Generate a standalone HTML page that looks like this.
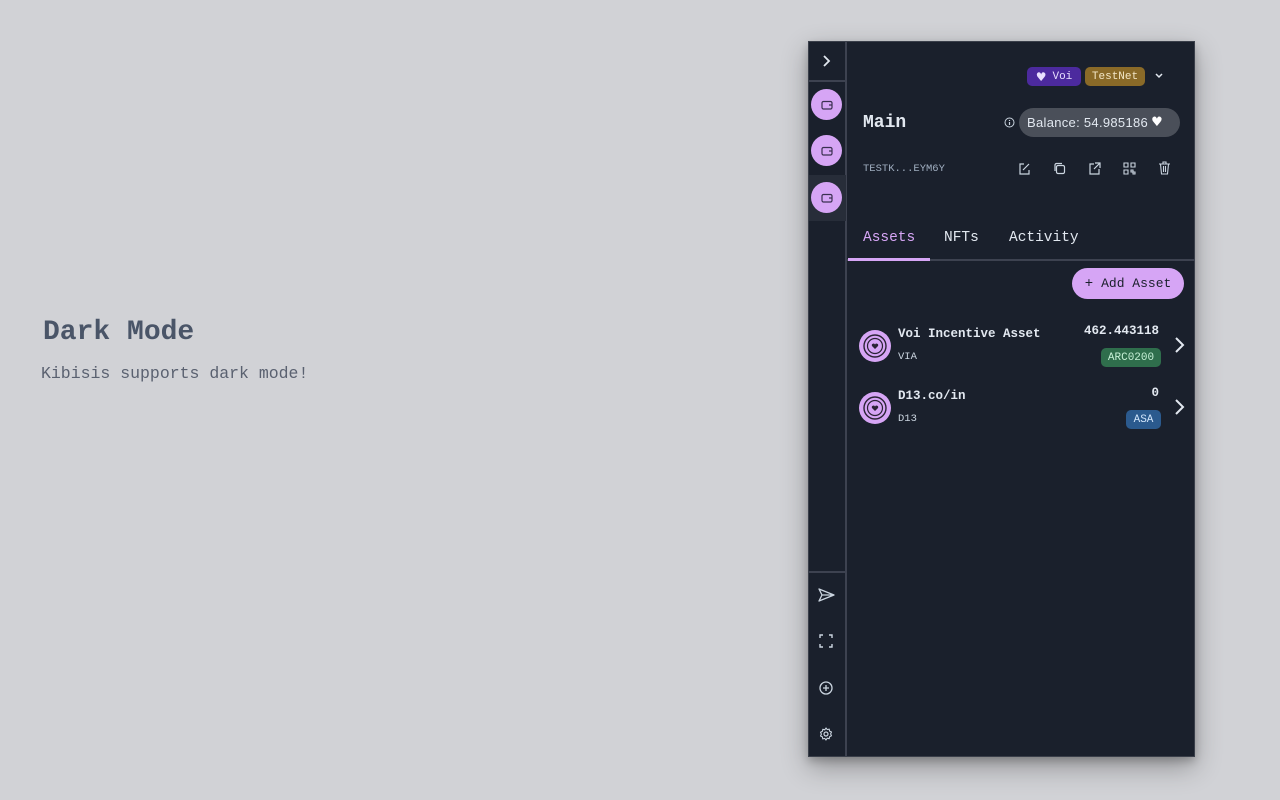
<!DOCTYPE html>
<html><head><style>
*{box-sizing:border-box;margin:0;padding:0}
body{width:1280px;height:800px;background:#d1d2d6;font-family:"Liberation Mono",monospace;position:relative;overflow:hidden}
.h{position:absolute;left:43px;top:317px;font-size:28px;color:#4a5568;font-weight:bold;letter-spacing:0px}
.s{position:absolute;left:41px;top:364px;font-size:16.5px;color:#5a6170}
.p{position:absolute;left:808px;top:41px;width:387px;height:716px;background:#1a202c;box-shadow:0 10px 25px rgba(0,0,0,.3),0 4px 8px rgba(0,0,0,.2);border:1px solid #3a3f4a;color:#e2e8f0}
.sb{position:absolute;left:0;top:0;width:38px;height:100%;border-right:2px solid #3d4250}
.hr{position:absolute;left:0;width:38px;height:2px;background:#3d4250}
.av{position:absolute;left:2px;width:31px;height:31px;border-radius:50%;background:#d6a5f5;display:flex;align-items:center;justify-content:center}
.ab{position:absolute;font-size:11px}
.tag{position:absolute;height:19px;border-radius:5px;font-size:11px;display:flex;align-items:center;justify-content:center}
svg{display:block}
</style></head><body>
<div class="h">Dark Mode</div>
<div class="s">Kibisis supports dark mode!</div>
<div class="p">
 <div class="sb">
  <svg style="position:absolute;left:12px;top:12px" width="12" height="14" viewBox="0 0 12 14"><path d="M3 2l5 5-5 5" stroke="#e2e8f0" stroke-width="1.8" fill="none"/></svg>
  <div class="hr" style="top:38px"></div>
  <div class="av" style="top:47px"><svg width="12" height="10" viewBox="0 0 12 10"><rect x="1" y="1.5" width="10" height="7.5" rx="1.5" stroke="#3a3050" stroke-width="1.2" fill="none"/><path d="M8 5h3" stroke="#3a3050" stroke-width="1.2"/></svg></div>
  <div class="av" style="top:93px"><svg width="12" height="10" viewBox="0 0 12 10"><rect x="1" y="1.5" width="10" height="7.5" rx="1.5" stroke="#3a3050" stroke-width="1.2" fill="none"/><path d="M8 5h3" stroke="#3a3050" stroke-width="1.2"/></svg></div>
  <div style="position:absolute;left:0;top:133px;width:37px;height:46px;background:#272d39"></div>
  <div class="av" style="top:140px"><svg width="12" height="10" viewBox="0 0 12 10"><rect x="1" y="1.5" width="10" height="7.5" rx="1.5" stroke="#3a3050" stroke-width="1.2" fill="none"/><path d="M8 5h3" stroke="#3a3050" stroke-width="1.2"/></svg></div>
  <div class="hr" style="top:529px"></div>
  <svg style="position:absolute;left:9px;top:546px" width="17" height="14" viewBox="0 0 17 14"><path d="M1 1l15 6-15 6 3-6z M4 7h12" stroke="#cbd5e0" stroke-width="1.3" fill="none" stroke-linejoin="round"/></svg>
  <svg style="position:absolute;left:10px;top:592px" width="14" height="14" viewBox="0 0 14 14"><path d="M1 4V1h3M10 1h3v3M13 10v3h-3M4 13H1v-3" stroke="#cbd5e0" stroke-width="1.4" fill="none"/></svg>
  <svg style="position:absolute;left:10px;top:639px" width="14" height="14" viewBox="0 0 14 14"><circle cx="7" cy="7" r="6" stroke="#cbd5e0" stroke-width="1.3" fill="none"/><path d="M7 4v6M4 7h6" stroke="#cbd5e0" stroke-width="1.3"/></svg>
  <svg style="position:absolute;left:10px;top:685px" width="14" height="14" viewBox="0 0 14 14"><circle cx="7" cy="7" r="2" stroke="#cbd5e0" stroke-width="1.2" fill="none"/><path d="M7 1l1.2 1.6 2-.5.4 2 1.9.9-.9 1.9.9 1.9-1.9.9-.4 2-2-.5L7 13l-1.2-1.6-2 .5-.4-2-1.9-.9.9-1.9-.9-1.9 1.9-.9.4-2 2 .5z" stroke="#cbd5e0" stroke-width="1.1" fill="none" stroke-linejoin="round"/></svg>
 </div>
 <div class="tag" style="left:218px;top:25px;width:54px;background:#4c2a9e;color:#e9e0ff"><span style="font-family:'DejaVu Sans';font-size:12px;margin-right:6px">♥</span>Voi</div>
 <div class="tag" style="left:276px;top:25px;width:60px;background:#8a6a28;color:#f2e6c6">TestNet</div>
 <svg style="position:absolute;left:345px;top:30px" width="10" height="8" viewBox="0 0 10 8"><path d="M2 2l3 3 3-3" stroke="#e2e8f0" stroke-width="1.5" fill="none"/></svg>
 <div style="position:absolute;left:54px;top:71px;font-size:18px;font-weight:bold;color:#e2e8f0">Main</div>
 <svg style="position:absolute;left:195px;top:75px" width="11" height="11" viewBox="0 0 11 11"><circle cx="5.5" cy="5.5" r="4.5" stroke="#cbd5e0" fill="none"/><path d="M5.5 5v3M5.5 3v1" stroke="#cbd5e0" stroke-width="1.2"/></svg>
 <div style="position:absolute;left:210px;top:66px;width:161px;height:29px;border-radius:15px;background:#4a4f59;color:#e2e8f0;font-family:'Liberation Sans',sans-serif;font-size:13px;display:flex;align-items:center;padding-left:8px;letter-spacing:.3px">Balance: 54.985186 <span style="font-family:'DejaVu Sans';margin-left:3px;color:#fff">♥</span></div>
 <div class="ab" style="left:54px;top:121px;color:#a0aec0;font-size:10.5px">TESTK...EYM6Y</div>
 <svg style="position:absolute;left:209px;top:120px" width="13" height="13" viewBox="0 0 13 13"><path d="M6 2H2v10h9V8M5 8l6-6" stroke="#cbd5e0" stroke-width="1.2" fill="none"/></svg>
 <svg style="position:absolute;left:244px;top:120px" width="13" height="13" viewBox="0 0 13 13"><rect x="3.5" y="3.5" width="8" height="8" rx="1.5" stroke="#cbd5e0" stroke-width="1.2" fill="none"/><path d="M2 9V3a1.5 1.5 0 0 1 1.5-1.5H9" stroke="#cbd5e0" stroke-width="1.2" fill="none"/></svg>
 <svg style="position:absolute;left:279px;top:120px" width="13" height="13" viewBox="0 0 13 13"><path d="M6 2H2v10h9V7M7 1h5v5M12 1L6 7" stroke="#cbd5e0" stroke-width="1.2" fill="none"/></svg>
 <svg style="position:absolute;left:314px;top:120px" width="13" height="13" viewBox="0 0 13 13"><path d="M1 1h4v4H1zM8 1h4v4H8zM1 8h4v4H1zM8 8h2v2H8zM10 10h2v2h-2z" stroke="#cbd5e0" stroke-width="1.1" fill="none"/></svg>
 <svg style="position:absolute;left:349px;top:119px" width="13" height="14" viewBox="0 0 13 14"><path d="M1 3h11M5 3V1h3v2M2.5 3l1 10h6l1-10M5.5 5v6M7.5 5v6" stroke="#cbd5e0" stroke-width="1.1" fill="none"/></svg>
 <div style="position:absolute;left:54px;top:188px;font-size:14.5px;color:#d6a5f5">Assets</div>
 <div style="position:absolute;left:135px;top:188px;font-size:14.5px;color:#e2e8f0">NFTs</div>
 <div style="position:absolute;left:200px;top:188px;font-size:14.5px;color:#e2e8f0">Activity</div>
 <div style="position:absolute;left:38px;top:217px;width:348px;height:2px;background:#3d4250"></div>
 <div style="position:absolute;left:39px;top:216px;width:82px;height:3px;background:#d6a5f5"></div>
 <div style="position:absolute;left:263px;top:226px;width:112px;height:31px;border-radius:16px;background:#d6a5f5;color:#1a202c;font-size:13px;display:flex;align-items:center;justify-content:center"><span style="margin-right:8px;font-size:14px">+</span>Add Asset</div>
 <div style="position:absolute;left:50px;top:288px;width:32px;height:32px;border-radius:50%;background:#d6a5f5;display:flex;align-items:center;justify-content:center"><svg width="26" height="26" viewBox="0 0 26 26"><circle cx="13" cy="13" r="11" stroke="#2a2335" stroke-width="1.4" fill="none"/><circle cx="13" cy="13" r="7.5" stroke="#2a2335" stroke-width="1.2" fill="none"/><path d="M13 16l-3-3a1.6 1.6 0 0 1 3-1.5 1.6 1.6 0 0 1 3 1.5z" fill="#2a2335"/></svg></div>
 <div style="position:absolute;left:89px;top:285px;font-size:12.5px;font-weight:bold">Voi Incentive Asset</div>
 <div style="position:absolute;left:89px;top:309px;font-size:10.5px;color:#cbd5e0">VIA</div>
 <div style="position:absolute;right:35px;top:282px;font-size:12.5px;font-weight:bold">462.443118</div>
 <div class="tag" style="left:292px;top:306px;width:60px;background:#2f6e4c;color:#c6f0d6">ARC0200</div>
 <svg style="position:absolute;left:364px;top:294px" width="12" height="18" viewBox="0 0 12 18"><path d="M3 2l7 7-7 7" stroke="#e2e8f0" stroke-width="2" fill="none"/></svg>
 <div style="position:absolute;left:50px;top:350px;width:32px;height:32px;border-radius:50%;background:#d6a5f5;display:flex;align-items:center;justify-content:center"><svg width="26" height="26" viewBox="0 0 26 26"><circle cx="13" cy="13" r="11" stroke="#2a2335" stroke-width="1.4" fill="none"/><circle cx="13" cy="13" r="7.5" stroke="#2a2335" stroke-width="1.2" fill="none"/><path d="M13 16l-3-3a1.6 1.6 0 0 1 3-1.5 1.6 1.6 0 0 1 3 1.5z" fill="#2a2335"/></svg></div>
 <div style="position:absolute;left:89px;top:347px;font-size:12.5px;font-weight:bold">D13.co/in</div>
 <div style="position:absolute;left:89px;top:371px;font-size:10.5px;color:#cbd5e0">D13</div>
 <div style="position:absolute;right:35px;top:344px;font-size:12.5px;font-weight:bold">0</div>
 <div class="tag" style="left:317px;top:368px;width:35px;background:#2b5a8e;color:#d0e4fa">ASA</div>
 <svg style="position:absolute;left:364px;top:356px" width="12" height="18" viewBox="0 0 12 18"><path d="M3 2l7 7-7 7" stroke="#e2e8f0" stroke-width="2" fill="none"/></svg>
</div>
</body></html>
